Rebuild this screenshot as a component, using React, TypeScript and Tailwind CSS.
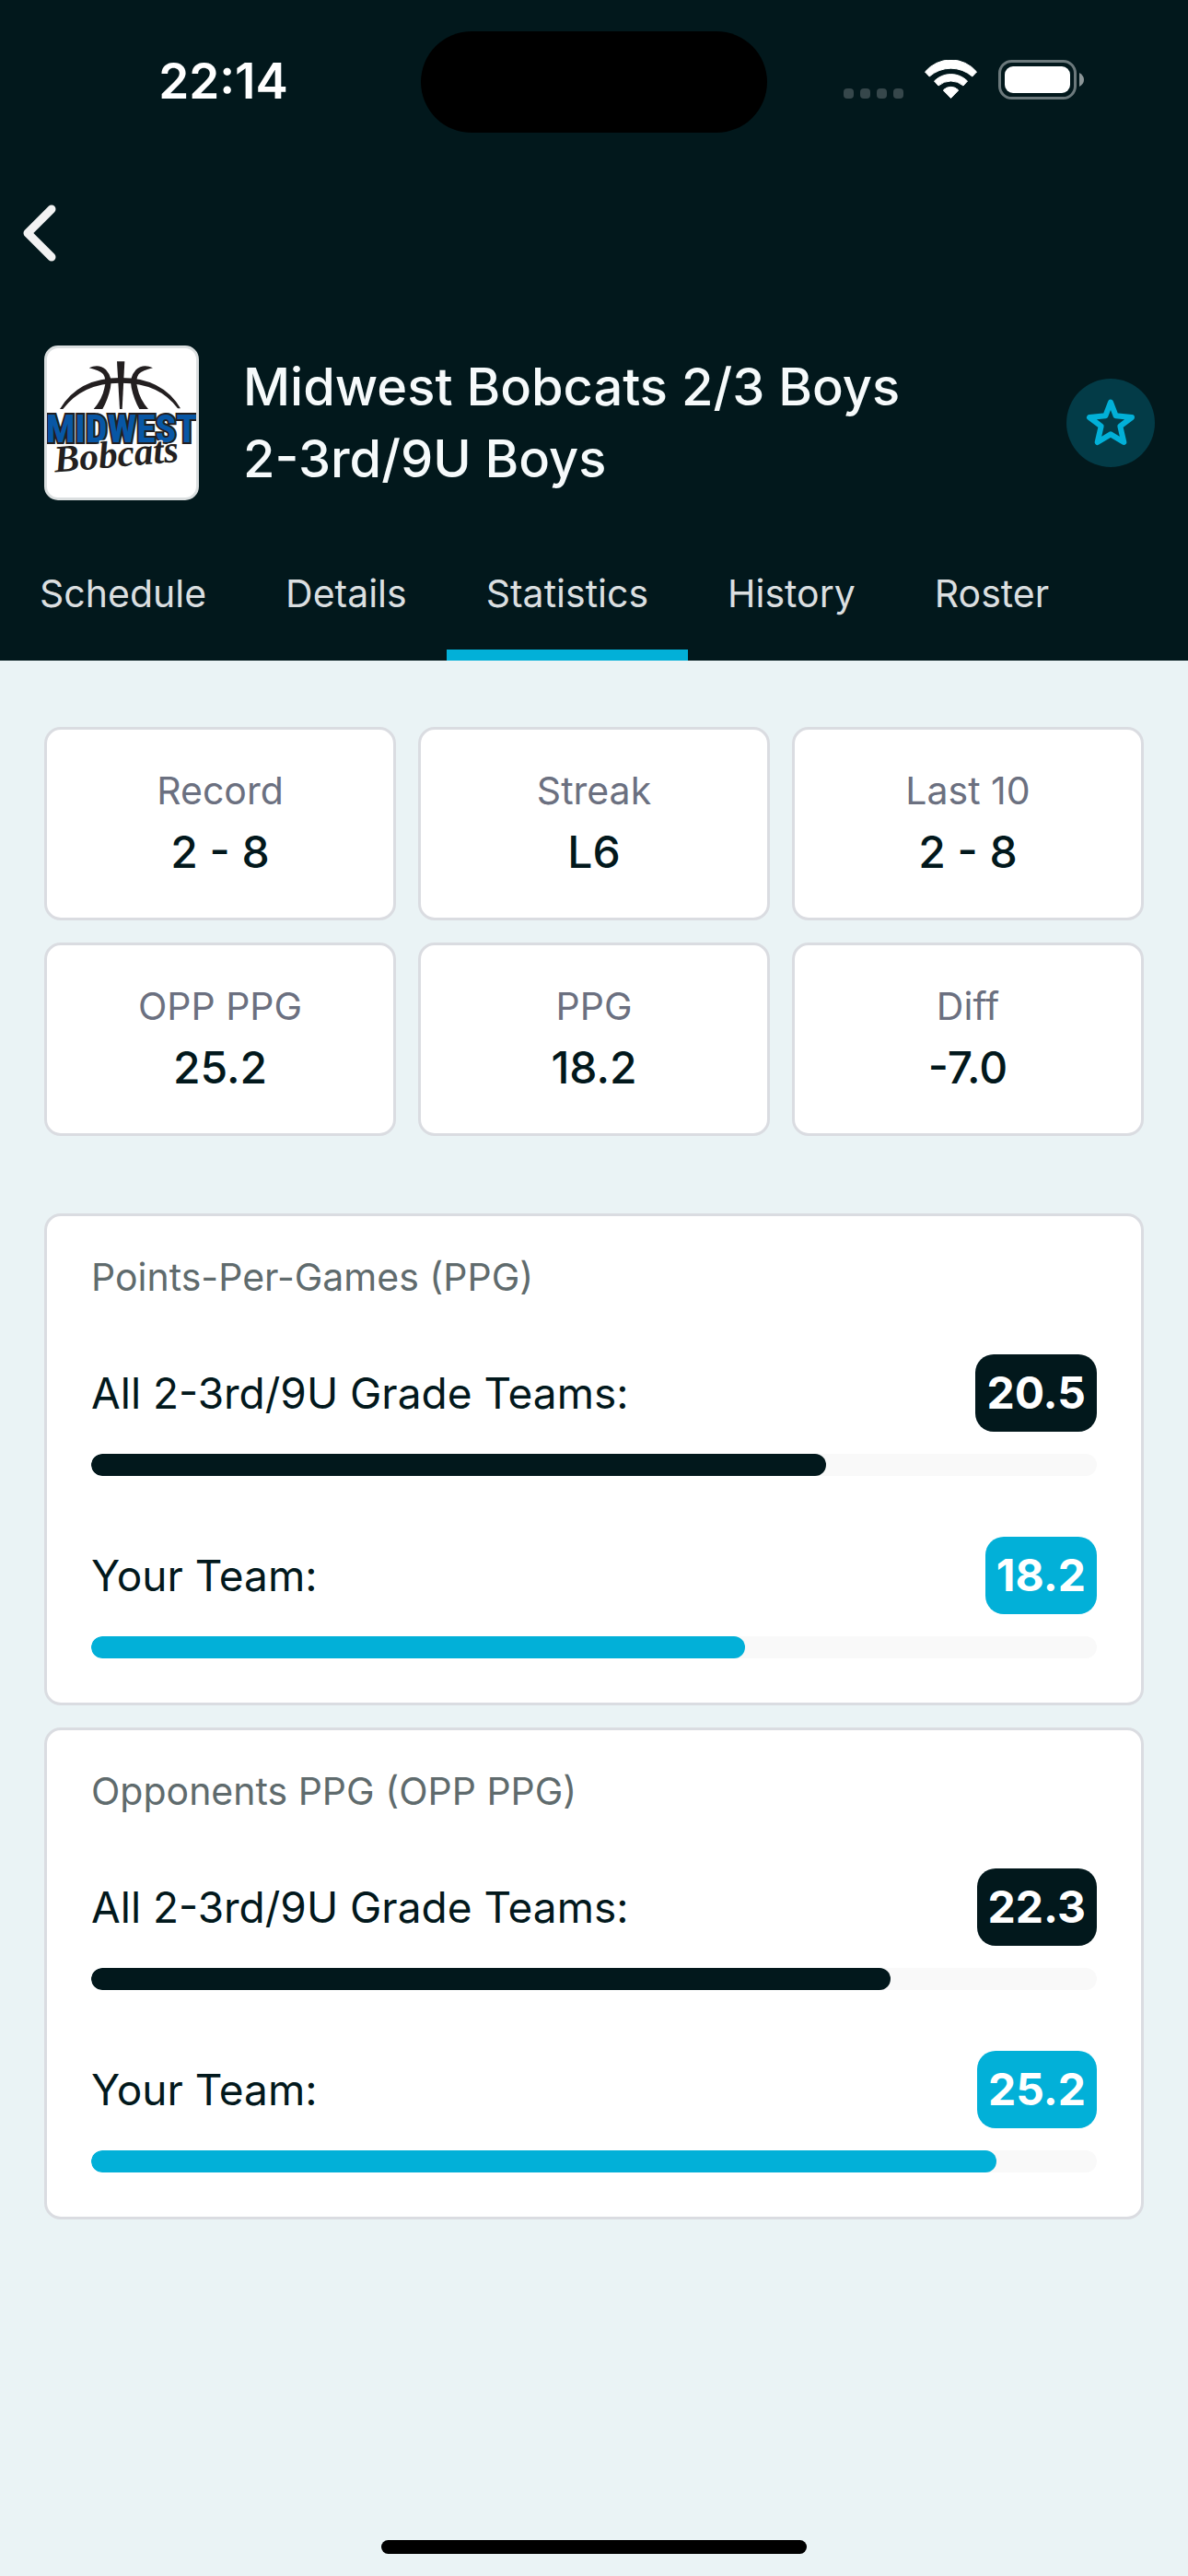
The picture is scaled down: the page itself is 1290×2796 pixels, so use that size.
import { useState } from "react";

interface Stat {
  label: string;
  value: string;
}

interface Comparison {
  title: string;
  average: number;
  team: number;
}

const TABS = ["Schedule", "Details", "Statistics", "History", "Roster"];

const STATS: Stat[] = [
  { label: "Record", value: "2 - 8" },
  { label: "Streak", value: "L6" },
  { label: "Last 10", value: "2 - 8" },
  { label: "OPP PPG", value: "25.2" },
  { label: "PPG", value: "18.2" },
  { label: "Diff", value: "-7.0" },
];

const COMPARISONS: Comparison[] = [
  { title: "Points-Per-Games (PPG)", average: 20.46, team: 18.2 },
  { title: "Opponents PPG (OPP PPG)", average: 22.26, team: 25.2 },
];

// Points at which a bar is full
const MAX_POINTS = 28;

function StatusBar() {
  return (
    <div className="grid grid-cols-[1fr_376px_1fr] items-center pt-[34px] text-white">
      <div className="pb-0.5 pl-7 text-center text-[53px] font-semibold leading-none">22:14</div>
      <div className="h-[110px] rounded-full bg-black" />
      <div className="flex items-center justify-center gap-[23px] pb-1.5 pr-[30px]">
        <div className="flex gap-[7px] pt-[30px]">
          <span className="size-[11px] rounded bg-[#36474b]" />
          <span className="size-[11px] rounded bg-[#36474b]" />
          <span className="size-[11px] rounded bg-[#36474b]" />
          <span className="size-[11px] rounded bg-[#36474b]" />
        </div>
        <svg viewBox="0 0 57 42" className="h-[42px] w-[57px]" fill="currentColor" stroke="currentColor" strokeLinejoin="round">
          <path d="M.5 13A36.6 36.6 0 0 1 56.5 13L51.8 18A35.2 35.2 0 0 0 5.2 18Z" />
          <path d="M10.5 23A25.4 25.4 0 0 1 46.5 23L42 28A20.6 20.6 0 0 0 15 28Z" />
          <path d="M20.3 33A11 11 0 0 1 36.7 33L28.5 41.5Z" />
        </svg>
        <svg viewBox="0 0 94 43" className="h-[43px] w-[94px]">
          <rect x="1.5" y="1.5" width="82" height="40" rx="13" fill="none" stroke="#6c797c" strokeWidth="3" />
          <rect x="7" y="7" width="71" height="29" rx="9" fill="#fff" />
          <path d="M88 14Q93 17 93 21.5Q93 26 88 29Z" fill="#8c9698" />
        </svg>
      </div>
    </div>
  );
}

function TeamLogo() {
  return (
    <svg
      viewBox="63 54 486 486"
      role="img"
      aria-label="Midwest Bobcats"
      className="size-[168px] shrink-0 rounded-[15px] border-[3px] border-[#dbdfe0] bg-white"
    >
      {/* Basketball */}
      <g fill="#231f20">
        <path d="M105 252Q165 150 303 150Q440 150 498 250L489 250Q428 166 303 167Q180 166 115 252Z" />
        <path d="M291 97H316L308 252H300Z" />
        <path d="M200 118Q232 103 255 124Q278 150 270 182Q262 220 244 252H215Q243 220 250 184Q258 155 246 138Q234 126 200 118Z" />
        <path d="M408 118Q376 103 353 124Q330 150 338 182Q346 220 364 252H393Q365 220 358 184Q350 155 362 138Q374 126 408 118Z" />
      </g>
      <text
        x="306"
        y="359"
        textAnchor="middle"
        fontSize="126"
        fill="#0857a5"
        stroke="#231f20"
        strokeWidth="12"
        strokeLinejoin="miter"
        paintOrder="stroke"
        className="font-['Liberation_Sans_Narrow','Roboto_Condensed','Liberation_Serif',serif] font-bold"
      >
        MIDWEST
      </text>
      <text
        x="292"
        y="440"
        textAnchor="middle"
        fontSize="124"
        fill="#231f20"
        stroke="#fff"
        strokeWidth="8"
        strokeLinejoin="round"
        paintOrder="stroke"
        transform="rotate(-5 292 440)"
        className="font-['Liberation_Serif',serif] font-bold italic"
      >
        Bobcats
      </text>
    </svg>
  );
}

function StatCard({ label, value }: Stat) {
  return (
    <div className="rounded-[18px] border-[3px] border-[#dadce1] bg-white pb-[34px] pt-9 text-center">
      <dt className="text-[41px] leading-[60px] text-[#6b7080]">{label}</dt>
      <dd className="text-[48px] font-medium leading-[74px]">{value}</dd>
    </div>
  );
}

function PointsBar({ label, value, accent }: { label: string; value: number; accent?: boolean }) {
  const color = accent ? "bg-[#02b0d8]" : "bg-[#02181c]";

  return (
    <div>
      <div className="flex items-center justify-between">
        <span className="text-[46px] leading-[72px]">{label}</span>
        <span className={`rounded-[20px] px-3 text-[48px] font-bold leading-[84px] text-white ${color}`}>
          {value.toFixed(1)}
        </span>
      </div>
      <div
        role="progressbar"
        aria-label={label}
        aria-valuenow={value}
        aria-valuemax={MAX_POINTS}
        className="mt-6 h-6 overflow-hidden rounded-full bg-[#f9f9f9]"
      >
        <div className={`h-full rounded-full ${color}`} style={{ width: `${(value / MAX_POINTS) * 100}%` }} />
      </div>
    </div>
  );
}

function ComparisonPanel({ title, average, team }: Comparison) {
  return (
    <section className="rounded-[18px] border-[3px] border-[#dadce1] bg-white px-12 pb-12 pt-9">
      <h2 className="text-[41px] leading-[60px] text-[#5f6b6d]">{title}</h2>
      <div className="mt-[54px] flex flex-col gap-[66px]">
        <PointsBar label="All 2-3rd/9U Grade Teams:" value={average} />
        <PointsBar label="Your Team:" value={team} accent />
      </div>
    </section>
  );
}

export default function App() {
  const [activeTab, setActiveTab] = useState("Statistics");
  const [favorite, setFavorite] = useState(false);

  return (
    <div className="flex min-h-screen flex-col bg-[#eaf3f5] font-['Inter',sans-serif] text-[#02181c]">
      <header className="bg-[#02181c]">
        <StatusBar />

        <div className="flex pb-[91px] pl-6 pt-[78px]">
          <button type="button" aria-label="Back">
            <svg viewBox="0 0 37 62" className="h-[62px] w-[37px]" fill="none" stroke="#f2f2f2" strokeWidth="9" strokeLinecap="round" strokeLinejoin="round">
              <path d="M32 5L6 31L32 57" />
            </svg>
          </button>
        </div>

        <div className="flex items-center gap-12 pl-12 pr-9">
          <TeamLogo />
          <h1 className="flex-1 text-[56px] font-medium leading-[78px] text-[#f6fafb]">
            Midwest Bobcats 2/3 Boys
            <br />
            2-3rd/9U Boys
          </h1>
          <button
            type="button"
            aria-label="Favorite"
            aria-pressed={favorite}
            onClick={() => setFavorite(!favorite)}
            className="size-24 shrink-0 rounded-full bg-[#033b47]"
          >
            <svg viewBox="174 93 288 288" fill={favorite ? "#02b0d8" : "none"} stroke="#02b0d8" strokeWidth="18" strokeLinejoin="round">
              <path d="M318 170L335 214L387 219L349 248L361 300L318 274L275 300L287 248L249 219L301 214Z" />
            </svg>
          </button>
        </div>

        <nav className="mt-[29px] flex">
          {TABS.map((tab) => (
            <button
              key={tab}
              type="button"
              onClick={() => setActiveTab(tab)}
              className={`border-b-[12px] px-[43px] pb-[31px] pt-[42px] text-[41px] leading-[60px] text-[#dbdfe0] ${
                tab === activeTab ? "border-[#02b0d8]" : "border-transparent"
              }`}
            >
              {tab}
            </button>
          ))}
        </nav>
      </header>

      <main className="flex-1 px-12 pt-[72px]">
        <dl className="grid grid-cols-3 gap-6">
          {STATS.map((stat) => (
            <StatCard key={stat.label} {...stat} />
          ))}
        </dl>

        <div className="mt-[84px] flex flex-col gap-6">
          {COMPARISONS.map((comparison) => (
            <ComparisonPanel key={comparison.title} {...comparison} />
          ))}
        </div>
      </main>

      {/* Home indicator */}
      <div className="mb-6 h-[15px] w-[462px] self-center rounded-full bg-black" />
    </div>
  );
}
